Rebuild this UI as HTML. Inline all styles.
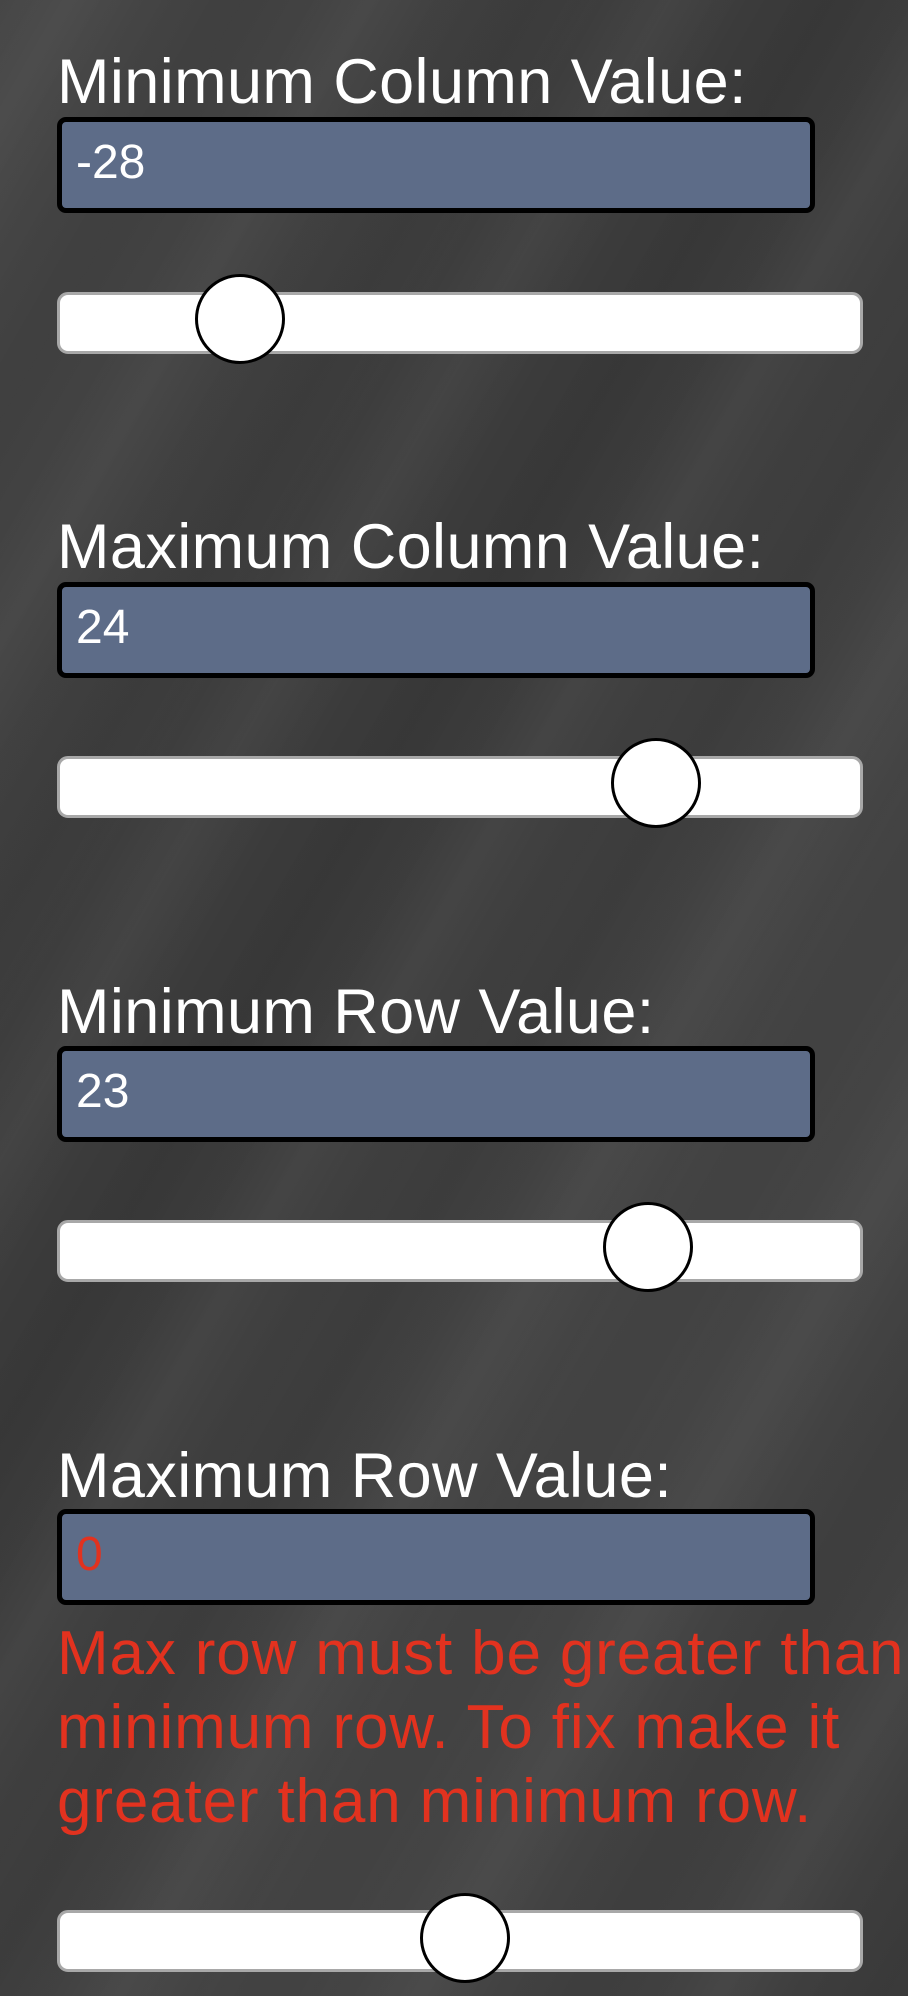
<!DOCTYPE html>
<html><head><meta charset="utf-8"><style>
html,body{margin:0;padding:0;}
body{width:908px;height:1996px;position:relative;overflow:hidden;font-family:"Liberation Sans",Arial,sans-serif;
background:#3e3e3e;
background-image:
repeating-linear-gradient(120deg,rgba(255,255,255,0) 0px,rgba(255,255,255,0.04) 60px,rgba(255,255,255,0) 130px,rgba(0,0,0,0.05) 200px,rgba(255,255,255,0) 260px),
linear-gradient(120deg,#464646,#3a3a3a 40%,#454545 70%,#3c3c3c);}
.lbl{position:absolute;left:57px;color:#fff;font-size:63px;line-height:1;white-space:nowrap;letter-spacing:0.4px;}
.inp{position:absolute;left:57px;width:748px;height:86px;border:5px solid #000;border-radius:9px;background:#5d6c88;}
.inp span{position:absolute;left:14px;top:17px;font-size:48px;color:#fff;line-height:1;}
.sl{position:absolute;left:57px;width:800px;height:56px;background:#fff;border:3px solid #a8a8a8;border-radius:11px;}
.th{position:absolute;width:84px;height:84px;border:3px solid #000;border-radius:50%;background:#fff;}
.err{position:absolute;left:57px;top:1617px;color:#e2321f;font-size:62px;line-height:74px;white-space:nowrap;letter-spacing:0.85px;}
</style></head><body>
<div class="lbl" style="top:51px">Minimum Column Value:</div>
<div class="inp" style="top:117px"><span>-28</span></div>
<div class="sl" style="top:292px"></div>
<div class="th" style="left:195px;top:274px"></div>

<div class="lbl" style="top:516px">Maximum Column Value:</div>
<div class="inp" style="top:582px"><span>24</span></div>
<div class="sl" style="top:756px"></div>
<div class="th" style="left:611px;top:738px"></div>

<div class="lbl" style="top:981px">Minimum Row Value:</div>
<div class="inp" style="top:1046px"><span>23</span></div>
<div class="sl" style="top:1220px"></div>
<div class="th" style="left:603px;top:1202px"></div>

<div class="lbl" style="top:1445px">Maximum Row Value:</div>
<div class="inp" style="top:1509px"><span style="color:#e2321f">0</span></div>
<div class="err">Max row must be greater than<br>minimum row. To fix make it<br>greater than minimum row.</div>
<div class="sl" style="top:1910px"></div>
<div class="th" style="left:420px;top:1893px"></div>
</body></html>
